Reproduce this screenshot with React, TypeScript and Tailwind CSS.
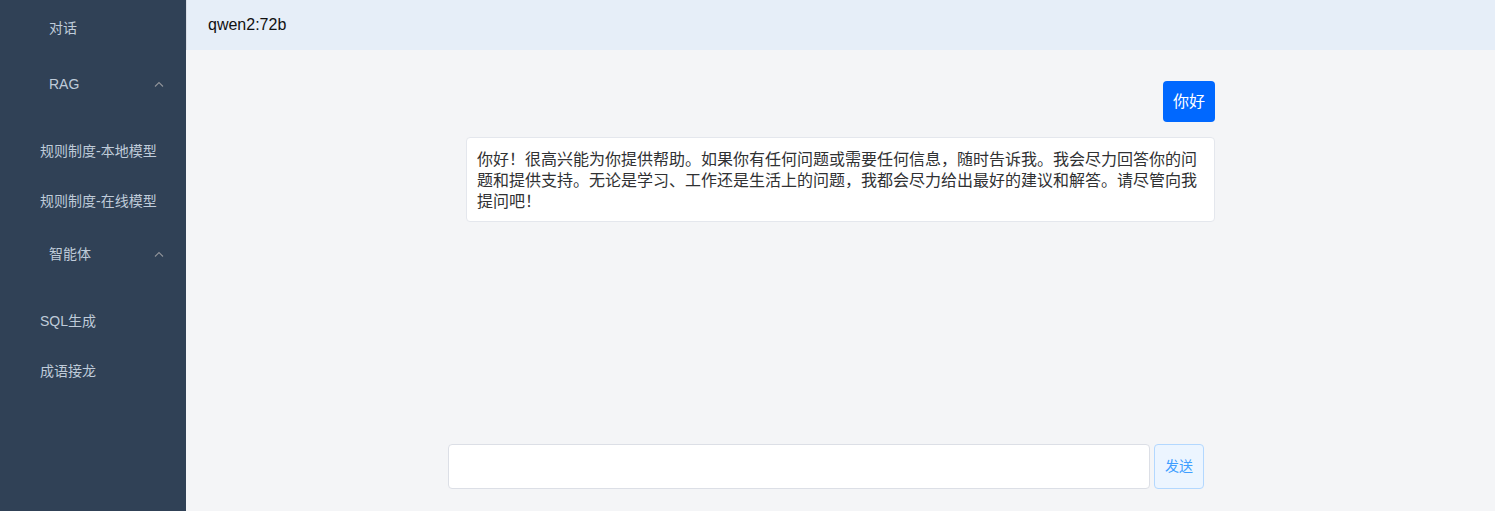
import React, { useState } from "react";

const ChevronUp = () => (
  <svg width="10" height="6" viewBox="0 0 10 6" fill="none" className="text-[#909399]">
    <path d="M1 5.5L5 1.5L9 5.5" stroke="currentColor" strokeWidth="1.1" />
  </svg>
);

const TopItem = ({ label, arrow }: { label: string; arrow?: boolean }) => (
  <div className="h-[56px] flex items-center justify-between pl-[49px] pr-[22px] text-[14px] text-[#bfcbd9]">
    <span>{label}</span>
    {arrow && <ChevronUp />}
  </div>
);

const SubItem = ({ label }: { label: string }) => (
  <div className="h-[50px] flex items-center pl-[40px] text-[14px] text-[#bfcbd9]">{label}</div>
);

const App: React.FC = () => {
  const [text, setText] = useState("");

  return (
    <div
      className="flex h-screen w-full overflow-hidden"
      style={{ fontFamily: '"Liberation Sans", Arial, "Noto Sans CJK SC", sans-serif' }}
    >
      <aside className="w-[186px] shrink-0 bg-[#304156]">
        <TopItem label="对话" />
        <TopItem label="RAG" arrow />
        <div className="pt-[14px]">
          <SubItem label="规则制度-本地模型" />
          <SubItem label="规则制度-在线模型" />
        </div>
        <TopItem label="智能体" arrow />
        <div className="pt-[14px]">
          <SubItem label="SQL生成" />
          <SubItem label="成语接龙" />
        </div>
      </aside>

      <main className="flex-1 flex flex-col bg-[#f4f5f7]">
        <header className="h-[50px] shrink-0 flex items-center pl-[21px] bg-[#e6eef8] border-l border-[#d8dde5] text-[16px] text-[#111]">
          qwen2:72b
        </header>

        <div className="flex-1 flex justify-center pt-[31px]">
          <div className="w-[749px] flex flex-col items-end gap-[15px]">
            <div className="bg-[#0068ff] text-white text-[16px] leading-[25px] px-[10px] py-[8px] rounded-[4px]">
              你好
            </div>
            <div className="w-full bg-white border border-[#e4e7ed] rounded-[4px] pl-[10px] pr-[10px] pt-[11px] pb-[9px] text-[16px] leading-[21px] text-[#303133]">
              你好！很高兴能为你提供帮助。如果你有任何问题或需要任何信息，随时告诉我。我会尽力回答你的问题和提供支持。无论是学习、工作还是生活上的问题，我都会尽力给出最好的建议和解答。请尽管向我提问吧！
            </div>
          </div>
        </div>

        <div className="flex justify-center pr-[29px] pb-[22px]">
          <div className="w-[756px] flex gap-[4px]">
            <input
              value={text}
              onChange={(e) => setText(e.target.value)}
              className="flex-1 h-[45px] bg-white border border-[#dcdfe6] rounded-[4px] px-3 text-[14px] outline-none"
            />
            <button className="w-[50px] h-[45px] bg-[#ecf5ff] border border-[#b3d8ff] rounded-[4px] text-[14px] text-[#409eff]">
              发送
            </button>
          </div>
        </div>
      </main>
    </div>
  );
};

export default App;
